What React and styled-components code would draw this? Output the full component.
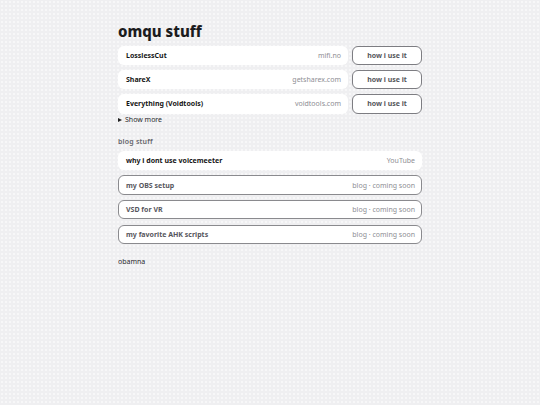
import React from 'react';
import styled, { createGlobalStyle } from 'styled-components';

const GlobalStyle = createGlobalStyle`
  html, body {
    margin: 0;
    padding: 0;
  }
  body {
    min-height: 405px;
    background-color: #efeff1;
    background-image: radial-gradient(circle, #f7f7f8 0.8px, transparent 1px);
    background-size: 4px 4px;
    font-family: "Noto Sans", "Open Sans", sans-serif;
    color: #1a1a1a;
  }
`;

const Page = styled.div`
  width: 304px;
  margin: 0 auto;
  padding-top: 21px;
  display: flex;
  flex-direction: column;
`;

const Title = styled.h1`
  margin: 0 0 3.5px;
  font-size: 15px;
  line-height: 21px;
  font-weight: 800;
  color: #1c1c1e;
`;

const List = styled.div`
  display: flex;
  flex-direction: column;
  gap: ${p => (p.$loose ? '5.2px' : '4.8px')};
`;

const ToolRow = styled.div`
  display: grid;
  grid-template-columns: 1fr 70px;
  gap: 4px;
`;

const Card = styled.div`
  height: 19.5px;
  box-sizing: border-box;
  display: flex;
  align-items: center;
  justify-content: space-between;
  padding: 0 6px 0 7px;
  background: #fff;
  border-radius: 6px;
  border: 1px solid ${p => (p.$outlined ? '#8a8a8e' : 'transparent')};
  font-size: 7px;
`;

const Name = styled.span`
  font-weight: 700;
  color: ${p => (p.$muted ? '#56565d' : '#151515')};
`;

const Meta = styled.span`
  color: #8e8e94;
`;

const Button = styled.button`
  height: 19.5px;
  box-sizing: border-box;
  border: 1px solid #7d7d82;
  border-radius: 6px;
  background: #fff;
  font-family: inherit;
  font-size: 7px;
  font-weight: 700;
  color: #55555a;
  padding: 0;
`;

const ShowMore = styled.div`
  display: flex;
  align-items: center;
  gap: 3px;
  margin-top: 1px;
  font-size: 7px;
  line-height: 10px;
  color: #2a2a2e;
  &::before {
    content: '';
    border-left: 4px solid #222;
    border-top: 2.5px solid transparent;
    border-bottom: 2.5px solid transparent;
  }
`;

const Section = styled.div`
  margin-top: 12px;
  font-size: 7px;
  font-weight: 600;
  color: #66666c;
  letter-spacing: 0.2px;
  line-height: 10px;
  margin-bottom: 4px;
`;

const Footer = styled.div`
  margin-top: 12.5px;
  font-size: 7px;
  line-height: 10px;
  color: #2a2a2e;
`;

const tools = [
  { name: 'LosslessCut', site: 'mifi.no' },
  { name: 'ShareX', site: 'getsharex.com' },
  { name: 'Everything (Voidtools)', site: 'voidtools.com' },
];

const posts = [
  { name: 'my OBS setup' },
  { name: 'VSD for VR' },
  { name: 'my favorite AHK scripts' },
];

export default function App() {
  return (
    <>
      <GlobalStyle />
      <Page>
        <Title>omqu stuff</Title>
        <List>
          {tools.map(t => (
            <ToolRow key={t.name}>
              <Card>
                <Name>{t.name}</Name>
                <Meta>{t.site}</Meta>
              </Card>
              <Button>how i use it</Button>
            </ToolRow>
          ))}
        </List>
        <ShowMore>Show more</ShowMore>
        <Section>blog stuff</Section>
        <List $loose>
          <Card>
            <Name>why i dont use voicemeeter</Name>
            <Meta>YouTube</Meta>
          </Card>
          {posts.map(p => (
            <Card key={p.name} $outlined>
              <Name $muted>{p.name}</Name>
              <Meta>blog · coming soon</Meta>
            </Card>
          ))}
        </List>
        <Footer>obamna</Footer>
      </Page>
    </>
  );
}
